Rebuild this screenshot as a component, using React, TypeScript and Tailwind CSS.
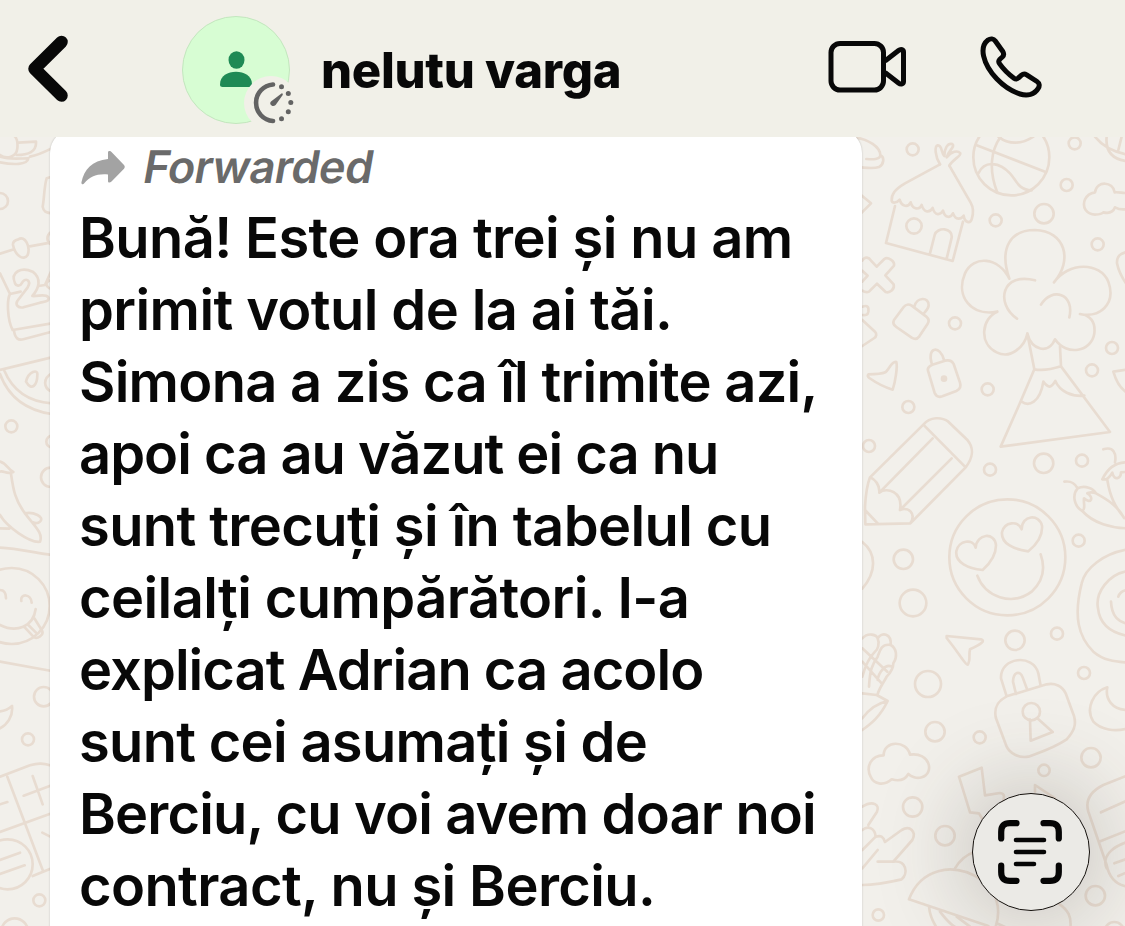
import type { ReactNode } from "react";

const messageLines = [
  { text: "Bună! Este ora trei și nu am", className: "tracking-[-0.6px]" },
  { text: "primit votul de la ai tăi.", className: "tracking-[-0.6px]" },
  { text: "Simona a zis ca îl trimite azi,", className: "tracking-[-0.74px]" },
  { text: "apoi ca au văzut ei ca nu", className: "tracking-[-1px]" },
  { text: "sunt trecuți și în tabelul cu", className: "tracking-[-0.6px]" },
  { text: "ceilalți cumpărători. I-a", className: "tracking-[-0.6px]" },
  { text: "explicat Adrian ca acolo", className: "tracking-[-0.95px]" },
  { text: "sunt cei asumați și de", className: "tracking-[-0.7px]" },
  { text: "Berciu, cu voi avem doar noi", className: "tracking-[-0.86px]" },
  { text: "contract, nu și Berciu.", className: "tracking-[-0.62px]" },
];

// Doodles are drawn on a grid three times finer than the page
function Tile({ x, y, children }: { x: number; y: number; children: ReactNode }) {
  return <g transform={`translate(${x} ${y}) scale(0.33333)`}>{children}</g>;
}

function Dots({ items }: { items: number[][] }) {
  return (
    <>
      {items.map(([cx, cy, r]) => (
        <circle key={`${cx}-${cy}`} cx={cx} cy={cy} r={r} />
      ))}
    </>
  );
}

function Wallpaper() {
  return (
    <svg
      className="absolute inset-0 h-full w-full"
      viewBox="0 137 1125 789"
      fill="none"
      stroke="#e8dcd1"
      strokeWidth="8"
      strokeLinecap="round"
      strokeLinejoin="round"
    >
      <Tile x={855} y={130}>
        <Dots
          items={[
            [173, 58, 18], [659, 40, 18], [635, 165, 18], [567, 251, 29], [422, 271, 18],
            [728, 343, 18], [300, 580, 18], [771, 654, 18], [711, 721, 18], [398, 778, 18], [177, 288, 23],
          ]}
        />
        {/* burger */}
        <path d="M0 22C40 28 76 50 76 76 76 90 50 88 34 87M76 76C90 82 86 104 72 111 55 117 30 114 0 110" />
        <path d="M0 180 48 220 0 268" />
        {/* hut */}
        <path d="M255 103 150 160C120 178 109 192 110 212 112 220 125 220 134 209 140 232 160 232 167 217 174 240 194 240 200 225 207 250 225 248 233 234 240 258 256 256 264 242 270 266 288 264 294 250 302 272 318 268 326 257 330 280 346 280 350 268 356 250 354 230 347 218L283 107" />
        <path d="M255 103C240 80 238 48 248 46 262 44 258 70 268 78 268 55 278 38 292 42 302 50 280 62 275 82 290 64 308 60 316 70 318 78 292 90 283 107" />
        <path d="M120 228 93 339 293 393 324 275M225 370 239 315C246 290 294 292 290 323L275 386" />
        {/* basketball */}
        <circle cx="469" cy="82" r="114" />
        <path d="M363 45 572 126M437 20C408 60 400 120 427 188M370 130C390 88 435 98 465 130 485 152 490 180 530 181M430 20C460 44 500 44 535 20" />
        {/* fruit bowl */}
        <path d="M720 20C745 52 785 68 820 74M755 20C750 70 780 90 820 94M800 20 790 60" />
        {/* cloud */}
        <path d="M820 190C795 188 790 186 779 187 775 155 726 150 720 187 690 192 680 220 692 240 708 262 740 252 745 247 765 252 775 245 780 232 795 240 805 240 820 236" />
        <path d="M820 365C795 370 785 378 786 400 792 430 805 450 820 470" />
        {/* plaster cross */}
        <path d="M22 392C30 378 42 382 48 392L65 410 88 387C98 380 120 392 117 407L91 436 116 463C120 478 104 490 92 486L66 461 42 485C36 488 28 486 22 482M22 422 38 437 22 455" />
        <path d="M22 530C38 525 42 530 40 545 38 556 32 556 22 555M22 570 60 605C66 612 64 620 58 624L22 648" />
        {/* bag */}
        <path d="M117 570 146 531C152 523 162 522 170 527L213 559C221 566 223 574 218 581L193 619C187 627 178 628 170 623L124 591C115 585 113 578 117 570ZM178 530C185 500 222 500 221 526 220 538 210 545 205 552" />
        <path d="M40 733C60 733 78 733 91 727 102 720 110 692 124 696 128 710 121 755 113 779 90 772 60 756 43 744 38 740 37 736 40 733Z" />
        {/* padlock */}
        <path d="M219 722C217 713 222 708 232 704L270 692C282 689 291 692 296 702L315 758C319 770 315 778 304 783L262 799C250 803 244 800 239 789ZM230 700C215 650 256 645 267 690" />
        <circle cx="267" cy="746" r="6" fill="#e8dcd1" />
        {/* volcano */}
        <path d="M463 446C430 350 470 300 540 300 630 302 655 390 597 457M463 446C430 380 355 375 330 430 300 500 350 560 427 545M597 457C640 395 735 395 760 455 785 525 730 565 675 552M427 545C380 565 370 640 425 667 470 690 510 645 517 611 530 660 580 675 600 628 635 680 710 665 718 610 722 575 705 555 675 552M540 451C440 425 420 520 486 566M558 524C590 470 660 490 643 562" />
        <path d="M517 611 538 718C565 723 590 718 618 709L615 650M538 718 490 830 437 950 765 906 618 709M500 815C520 830 555 820 565 755 580 775 588 775 601 753 615 785 650 800 688 797" />
        <path d="M820 718 775 725C785 760 800 780 820 790" />
      </Tile>

      <Tile x={855} y={390}>
        <Dots
          items={[
            [160, 51, 18], [42, 168, 18], [405, 239, 18], [566, 220, 29], [681, 212, 18], [145, 508, 29],
            [671, 452, 18], [174, 639, 40], [480, 751, 29], [606, 731, 18],
          ]}
        />
        {/* pencil */}
        <path d="M45 262 205 104C225 80 260 80 280 95L338 151C358 175 353 205 332 232L166 400 31 403 30 350C32 315 36 285 45 262ZM205 104 332 232M45 262C60 268 75 285 73 308 95 290 145 305 135 360 160 350 185 370 166 400M73 308 233 145M135 360 290 205M30 360 68 400" />
        {/* heart-eyed face */}
        <circle cx="457" cy="502" r="174" />
        <path d="M383 540C340 535 300 518 304 484 310 450 355 445 362 473 365 430 420 425 423 466 423 500 400 525 383 540ZM520 484C475 478 438 460 441 427 448 395 490 390 500 418 500 375 553 370 561 407 564 445 540 468 520 484ZM367 557C390 620 470 650 530 605 568 570 570 530 557 493" />
        {/* chillies */}
        <path d="M628 275C650 272 660 280 668 295M668 295C690 285 715 295 723 310 705 305 710 305 697 310 718 322 708 345 687 325 685 345 693 355 682 363 658 350 650 315 668 295ZM682 363C715 400 770 415 820 415M723 310C760 330 790 350 807 384M745 178C775 168 785 190 780 217M820 217C780 215 755 240 742 268 755 270 762 265 772 248 778 275 798 265 798 247L820 245M757 270C765 320 780 350 808 384" />
        <path d="M22 456C65 490 65 545 22 596" />
        {/* rose */}
        <path d="M820 478C745 490 690 535 680 580 655 680 670 740 715 785 750 815 790 815 820 818M820 543C760 550 720 610 729 655 735 710 775 730 820 738M768 635C770 680 790 695 820 702M790 620C795 605 805 600 820 600" />
        {/* corn */}
        <path d="M22 745C40 725 65 735 68 745 80 725 110 730 107 765 125 775 128 800 115 820 115 835 105 850 95 860 88 875 75 890 68 912M22 775 97 845M22 815 80 880M68 745C75 760 68 780 60 785 45 800 30 830 22 860M107 765C80 760 75 780 68 800 50 825 45 840 42 890M110 830C90 820 70 850 68 870M22 910 65 915 98 933C75 980 50 1000 22 1020M98 933C65 940 40 960 22 985" />
        <path d="M275 738 378 748C392 752 380 762 345 778 340 795 348 810 338 824 330 824 320 800 275 744Z" />
      </Tile>

      <Tile x={855} y={650}>
        <Dots
          items={[
            [219, 102, 39], [240, 245, 29], [374, 262, 18], [687, 69, 18], [708, 323, 29], [567, 361, 17],
            [173, 471, 29], [270, 557, 29], [721, 737, 29], [70, 795, 17], [529, 185, 26], [778, 845, 29],
          ]}
        />
        {/* lock */}
        <path d="M455 139 575 103C600 98 622 108 632 130L657 198C665 225 656 245 635 268 595 295 560 305 520 320 490 325 465 310 455 290L423 205C416 175 425 155 455 139ZM455 139 438 85C435 20 535 10 550 70L557 108M483 132 474 95C475 65 495 60 503 82L517 120M525 209 527 272 593 246 547 205" />
        {/* moon */}
        <path d="M757 112C715 125 690 175 715 215 738 240 780 246 820 235M757 112C750 145 770 180 820 180" />
        {/* cloud */}
        <path d="M86 316C86 270 155 270 165 314 225 305 240 370 200 382 185 387 168 380 160 372 150 390 135 395 110 388 85 410 55 400 48 382 30 350 50 315 86 316Z" />
        <path d="M312 380 380 353 390 436 435 429C450 430 450 440 440 470M312 380 345 487 372 490 384 510M540 425 540 405 600 445" />
        {/* hand */}
        <path d="M22 470C55 450 75 465 66 485L40 525M22 540C40 525 60 535 62 560 78 555 84 560 90 576L140 540C165 525 185 545 172 570L115 635C155 630 160 670 140 688 110 695 60 705 22 705M68 600 22 655M62 560 22 600M115 635 68 635" />
        {/* phone */}
        <path d="M820 375 745 405C705 425 690 450 700 485L755 645C762 680 780 705 820 710M820 450 738 487M820 540 732 575M820 575C770 590 740 620 755 655M820 625 778 640M820 665 790 678" />
        {/* mushroom */}
        <path d="M162 748C195 660 290 630 380 690 425 725 440 775 422 830M162 748 400 828M300 655C320 620 345 610 360 605M222 770C225 800 235 820 250 840M255 785C270 805 290 830 310 835M305 800 345 830M610 760C640 780 650 800 646 835M430 822 470 840" />
      </Tile>

      <Tile x={0} y={130}>
        <Dots items={[[0, 213, 24]]} />
        <path d="M0 75C20 90 50 80 52 55 54 35 50 25 45 20M55 38 108 35C110 65 85 75 50 75M0 80C30 90 60 85 85 85 82 105 40 105 0 97M90 80C115 75 135 65 155 55M155 140 140 145C132 170 133 205 128 230 130 245 138 248 155 250" />
        <path d="M0 371 42 358M85 350 155 337M155 305C138 315 138 335 155 345M55 328C75 315 92 350 83 375 70 395 45 375 39 345 38 335 45 330 55 328ZM0 430 30 492M30 492C20 510 22 570 38 600L155 580M30 492 62 485M42 602C45 625 55 632 70 628L155 605M115 468 135 465 155 420M155 450C133 455 135 470 155 478" />
        {/* calendar digit */}
        <path d="M45 460C30 425 65 410 98 425 125 445 118 475 97 498 115 500 135 490 145 502 148 512 140 515 120 518L70 532C55 535 45 525 52 513L83 472C95 450 75 440 65 460 60 470 48 468 45 460Z" />
        {/* melon */}
        <path d="M0 720 155 682M0 732C25 800 75 840 155 852M12 720C35 775 80 815 155 820M78 755C85 725 115 715 112 735 112 765 95 785 78 755ZM155 730C128 745 130 775 155 785" />
      </Tile>

      <Tile x={0} y={390}>
        <Dots items={[[34, 109, 18], [152, 262, 29], [157, 155, 18]]} />
        <path d="M0 215C20 220 25 240 40 246 20 255 10 240 0 245M33 252C40 300 45 330 75 370 105 410 130 430 120 455 90 460 20 410 0 375M75 370C100 365 135 380 120 395 115 400 105 400 98 397M0 415 28 416M0 473C45 475 90 485 155 495" />
        {/* tongue-out face */}
        <circle cx="35" cy="648" r="114" />
        <path d="M0 600C12 600 18 610 18 625M64 633C60 610 93 610 95 638M0 705C50 730 100 710 107 657M75 713 100 740C110 750 135 735 125 720L103 685M85 705 108 728" />
      </Tile>

      <Tile x={0} y={650}>
        <Dots items={[[131, 140, 29], [84, 268, 18], [118, 751, 18], [23, 643, 75], [44, 845, 40]]} />
        <path d="M0 35 155 63M0 184C20 182 28 175 36 168 40 200 20 225 0 235M0 380 90 346C115 338 130 340 155 347M0 546 155 490M22 380 128 660M98 678 155 655M71 437 155 406M98 378 128 463M0 463 22 456M127 548 155 562M0 630 60 608M0 672 74 646" />
      </Tile>
    </svg>
  );
}

function Header() {
  return (
    <header className="relative z-10 flex h-[137px] shrink-0 items-start bg-[#f1f0e8]">
      <button aria-label="Back" className="mt-[34px] ml-[26px]">
        <svg width="44" height="70" viewBox="0 0 44 70" fill="none" stroke="#080808" strokeWidth="12.5" strokeLinecap="round" strokeLinejoin="round">
          <path d="M35.500 8 8.500 34.800 35.500 61.500" />
        </svg>
      </button>
      <svg className="mt-4 ml-[112px]" width="116" height="112" viewBox="182 16 116 112">
        <circle cx="236" cy="70" r="53.500" fill="#d7fdd3" stroke="#c3e6be" />
        <ellipse cx="236.500" cy="60" rx="8" ry="8.700" fill="#1f8a55" />
        <path d="M220 84.500C220 75.500 228 71.800 236 71.800S252 75.500 252 84.500C252 86.300 251 87 249.500 87H222.500C221 87 220 86.300 220 84.500Z" fill="#1f8a55" />
        <circle cx="271" cy="103" r="27" fill="#f1f0e8" />
        <g fill="#636363">
          <path d="M273 84.500A18.300 18.300 0 0 0 273 121" fill="none" stroke="#636363" strokeWidth="4.600" strokeLinecap="round" />
          <circle cx="281.500" cy="86.800" r="2.500" />
          <circle cx="288.300" cy="93.500" r="2.500" />
          <circle cx="290.800" cy="102.600" r="2.500" />
          <circle cx="288.300" cy="111.800" r="2.500" />
          <circle cx="281.500" cy="118.700" r="2.500" />
          <path d="M281.800 93.300C283 93.500 283 94.500 282.500 95.300L275.600 105C272.500 108 268.500 104 271 101.500Z" />
        </g>
      </svg>
      <h1 className="mt-[41px] ml-[23px] w-[321px] text-[49px] leading-[60px] font-extrabold tracking-[-0.3px] whitespace-nowrap">nelutu varga</h1>
      <button aria-label="Video call" className="mt-[38px] ml-[184px]">
        <svg width="84" height="58" viewBox="826 38 84 58" fill="none" stroke="#080808" strokeWidth="5" strokeLinejoin="round">
          <rect x="831" y="43.500" width="52.500" height="46.500" rx="9" />
          <path d="M885 61 898.500 50.500C901 48.500 903.500 49.500 903.500 52V81.500C903.500 84 901 85 898.500 83L885 72.500" />
        </svg>
      </button>
      <button aria-label="Voice call" className="mt-[34px] ml-[68px]">
        <svg width="68" height="66" viewBox="978 34 68 66" fill="none" stroke="#080808" strokeWidth="5" strokeLinejoin="round">
          <path d="M988 40C990.500 38.300 993.500 38.500 995.300 41L1002.800 51.500C1004 53.500 1003.800 55.500 1002.300 57L999.600 59.500C998.600 60.700 998.600 62.300 999.500 63.600C1003.500 69.300 1008 73.800 1014 78.200C1015.500 79.300 1017 79.200 1018.300 78L1021.500 75.200C1023 73.900 1025 73.800 1026.700 74.800L1037 81.500C1039.500 83.200 1039.800 86 1038.200 88.400C1034.500 94.500 1027.500 96.300 1020 94C1003 88.500 987 71.500 983.600 56C982.200 49.500 983.500 43.500 988 40Z" />
        </svg>
      </button>
    </header>
  );
}

export default function App() {
  return (
    <div className="flex h-[926px] w-[1125px] flex-col overflow-hidden bg-[#f1f0ea] font-['Inter','Liberation_Sans',sans-serif] text-[#080808]">
      <Header />
      <main className="relative h-[789px] shrink-0 overflow-hidden bg-[#f2f0eb]">
        <Wallpaper />
        <article className="relative -mt-[8px] ml-[50px] h-[860px] w-[812px] rounded-[24px] bg-white pt-[8px] pl-[29px] shadow-[0_0_2px_rgba(0,0,0,0.22)]">
          <div className="flex h-[65px] items-start text-[#6a6a6a]">
            <svg className="mt-[14px] ml-[1px]" width="48" height="36" viewBox="80 151 48 36">
              <path d="M108 152.500C108 150.500 110 150.500 111.500 152L124 165C125 166.200 125 167.500 124 168.700L111.500 181.500C110 183 108 183 108 181V174.500C97 173.500 90 176.500 84.500 183C83 185 81 184.500 81.500 182C84 170 92 160.500 108 159Z" fill="#a3a3a3" />
            </svg>
            <span className="mt-[3px] ml-[16px] inline-block -skew-x-[10deg] text-[45px] leading-[54px] font-semibold tracking-[-0.5px]">Forwarded</span>
          </div>
          <div className="text-[56px] leading-[72px] font-semibold whitespace-nowrap">
            {messageLines.map((line) => (
              <p key={line.text} className={line.className}>
                {line.text}
              </p>
            ))}
          </div>
        </article>

        <button
          aria-label="Scan text"
          className="absolute top-[656px] left-[972px] flex h-[118px] w-[118px] items-center justify-center rounded-full border-[1.5px] border-[#15110d] bg-[#ebeae6] shadow-[0_0_90px_8px_rgba(60,55,45,0.26)]"
        >
          <svg className="-ml-[3px]" width="64" height="64" viewBox="0 0 64 64" fill="none" stroke="#050505" strokeLinecap="round">
            <path d="M3.200 18.500V12C3.200 6 6 3.200 12 3.200H18.500M45.500 3.200H52C58 3.200 60.800 6 60.800 12V18.500M60.800 45.500V52C60.800 58 58 60.800 52 60.800H45.500M18.500 60.800H12C6 60.800 3.200 58 3.200 52V45.500" strokeWidth="6.200" />
            <path d="M18 20H46M18 32H46M18 44H36" strokeWidth="4.600" />
          </svg>
        </button>
      </main>
    </div>
  );
}
